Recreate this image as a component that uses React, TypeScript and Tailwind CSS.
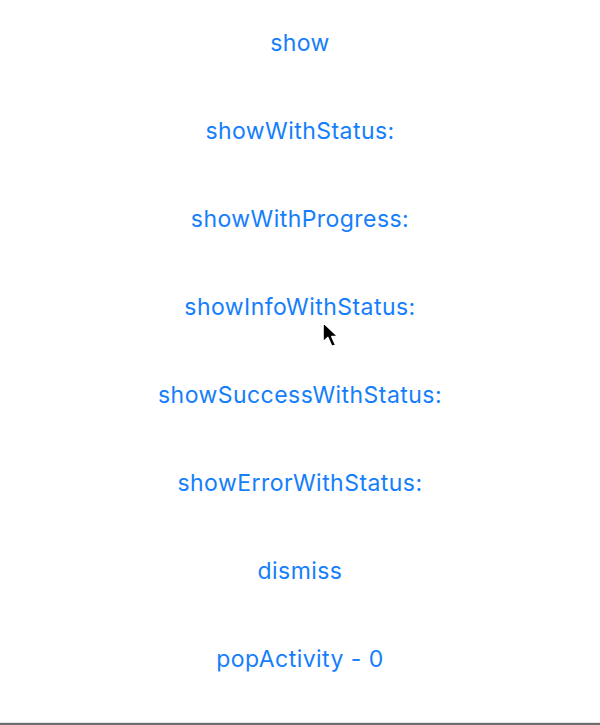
const items = [
  'show',
  'showWithStatus:',
  'showWithProgress:',
  'showInfoWithStatus:',
  'showSuccessWithStatus:',
  'showErrorWithStatus:',
  'dismiss',
  'popActivity - 0',
];

function Cursor() {
  return (
    <svg
      className="absolute left-[321px] top-[321px]"
      width="26"
      height="30"
      viewBox="0 0 26 30"
    >
      <path
        d="M2 1.5 L2 21 L6.8 16.6 L10.8 25.5 L14.6 23.9 L10.9 15.6 L17.2 15.6 Z"
        fill="#000"
        stroke="#fff"
        strokeWidth="1.6"
        strokeLinejoin="round"
      />
    </svg>
  );
}

export default function App() {
  return (
    <div className="relative w-[600px] h-[725px] bg-white overflow-hidden font-['Inter',sans-serif]">
      <div className="flex flex-col -mt-px">
        {items.map((label) => (
          <button
            key={label}
            className="h-[88px] flex items-center justify-center text-[23px] tracking-[0.45px] text-[#157efb]"
          >
            {label}
          </button>
        ))}
      </div>
      <Cursor />
      <div className="absolute left-0 right-0 bottom-0 h-[2px] bg-[#6e6e6e]" />
      <div className="absolute left-0 right-0 bottom-[2px] h-px bg-[#e4e4e4]" />
    </div>
  );
}
